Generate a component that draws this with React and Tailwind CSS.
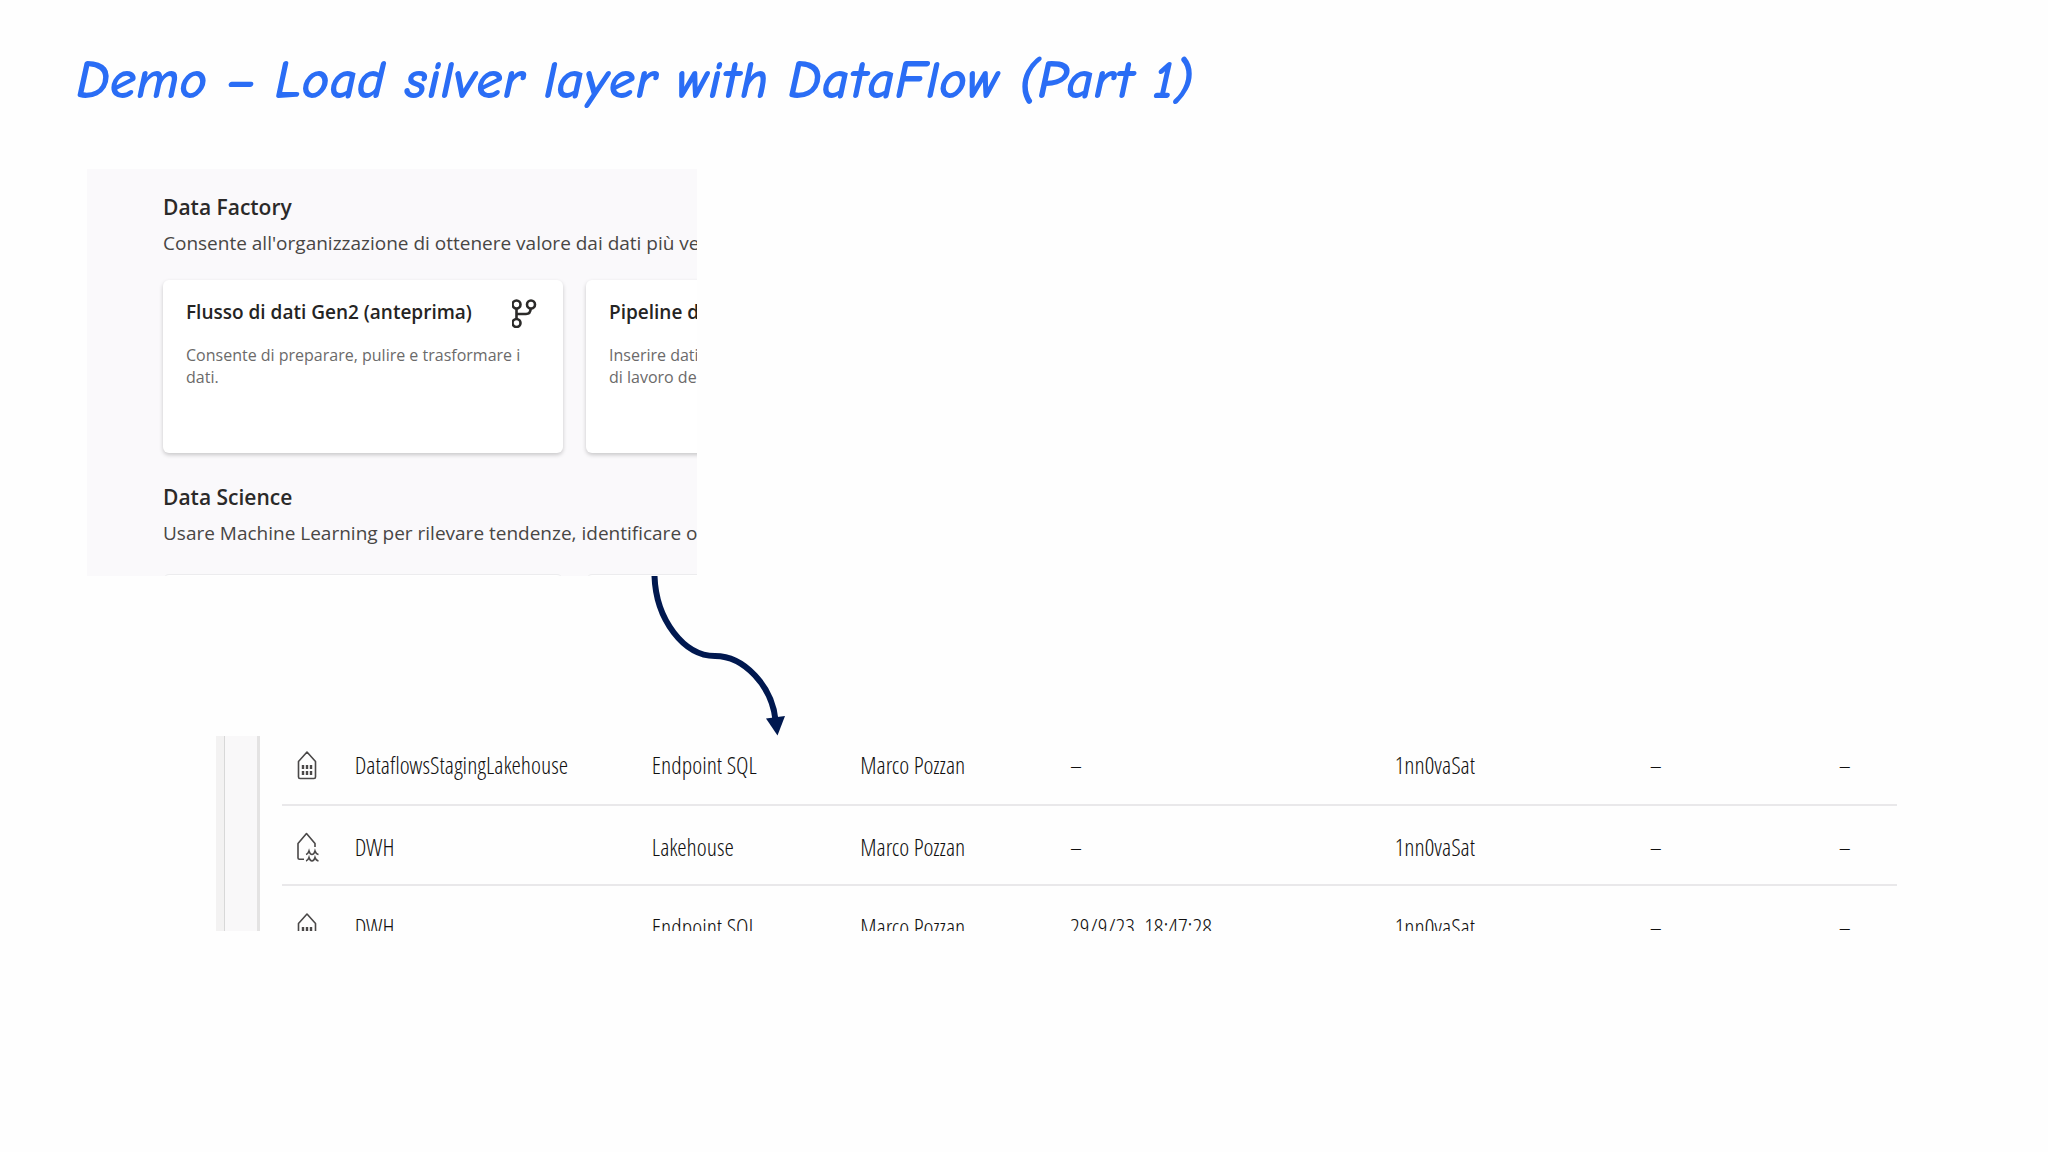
import { clsx } from 'clsx';

const cards = [
  {
    title: 'Flusso di dati Gen2 (anteprima)',
    text: 'Consente di preparare, pulire e trasformare i dati.',
    icon: true,
  },
  {
    title: 'Pipeline di dati',
    text: 'Inserire dati su vasta scala e orchestrare flussi di lavoro dei dati.',
  },
];

const rows = [
  { icon: 'endpoint', name: 'DataflowsStagingLakehouse', type: 'Endpoint SQL', owner: 'Marco Pozzan', refreshed: '–', workspace: '1nn0vaSat' },
  { icon: 'lakehouse', name: 'DWH', type: 'Lakehouse', owner: 'Marco Pozzan', refreshed: '–', workspace: '1nn0vaSat' },
  { icon: 'endpoint', name: 'DWH', type: 'Endpoint SQL', owner: 'Marco Pozzan', refreshed: '29/9/23, 18:47:28', workspace: '1nn0vaSat' },
];

function BranchIcon() {
  return (
    <svg viewBox="0 0 28 32" className="w-7 h-8 shrink-0" fill="none" stroke="#2b2a29" strokeWidth="2.6">
      <circle cx="4.5" cy="8.5" r="4" />
      <circle cx="19" cy="8.500" r="4" />
      <circle cx="4.500" cy="27" r="4" />
      <path d="M4.500 12.500v10.500M4.500 18H14q4.500 0 4.700-5.500" />
    </svg>
  );
}

function EndpointIcon() {
  return (
    <svg viewBox="0 0 24 32" className="block w-6 h-8" fill="none" stroke="#4a4848" strokeWidth="1.6">
      <path d="M3.500 12.500 12 3l8.500 9.500V28q0 1.500-1.500 1.500H5q-1.500 0-1.500-1.500z" strokeLinejoin="round" />
      <path d="M8 16v4M12 16v4M16 16v4M8 22v4M12 22v4M16 22v4" strokeWidth="2.400" />
    </svg>
  );
}

function LakehouseIcon() {
  return (
    <svg viewBox="0 0 24 32" className="block w-6 h-8" fill="none" stroke="#4a4848" strokeWidth="1.6">
      <path d="M20 16v-3.500l-8.500-10-8.500 10V27q0 1.200 1.500 1.200H9" strokeLinejoin="round" />
      <path d="M11 23.500q2-.5 3-3.500 1 3.500 3 3.500t3-3.500q1 3 3.500 3.500M11 30q2-.5 3-3.500 1 3.500 3 3.500t3-3.500q1 3 3.500 3.500" />
    </svg>
  );
}

function Card({ title, text, icon }) {
  return (
    <button className="w-[400px] h-[173px] shrink-0 rounded-md bg-white px-[23px] pt-4 text-left shadow-[0_2px_4px_rgba(0,0,0,0.2)] flex flex-col">
      <span className="flex h-9 w-full justify-between">
        <span className="pt-1 text-[19px] leading-6 font-semibold text-[#252423]">{title}</span>
        {icon && <BranchIcon />}
      </span>
      <span className="mt-3 text-[16px] leading-[22px] text-[#6b6a6a]">{text}</span>
    </button>
  );
}

function SectionHeader({ title, text }) {
  return (
    <div className="whitespace-nowrap">
      <h2 className="text-[21px] leading-7 font-semibold text-[#2b2a29]">{title}</h2>
      <p className="mt-2 text-[19px] leading-7 text-[#484644]">{text}</p>
    </div>
  );
}

function CatalogPanel() {
  return (
    <section className="w-[610px] h-[407px] overflow-hidden bg-[#faf9fb] pl-[76px] pt-6">
      <SectionHeader
        title="Data Factory"
        text="Consente all'organizzazione di ottenere valore dai dati più velocemente"
      />
      <div className="mt-[23px] flex gap-[23px]">
        {cards.map((card) => (
          <Card key={card.title} {...card} />
        ))}
      </div>
      <div className="mt-[30px]">
        <SectionHeader
          title="Data Science"
          text="Usare Machine Learning per rilevare tendenze, identificare outlier"
        />
      </div>
      <div className="mt-[27px] flex gap-[23px]">
        <div className="h-4 w-[400px] shrink-0 rounded-md border border-[#ececee] bg-white" />
        <div className="h-4 w-[400px] shrink-0 rounded-md border border-[#ececee] bg-white" />
      </div>
    </section>
  );
}

function FlowArrow() {
  return (
    <svg viewBox="640 576 160 160" className="block w-40 h-40 ml-[640px]">
      <path d="M654.500 576C656 620 684 656 715 656c29 0 57 30 60.500 64" fill="none" stroke="#00184f" strokeWidth="6" />
      <path d="M766 718.500 785 716l-7.500 19.500z" fill="#00184f" />
    </svg>
  );
}

function ItemsTable() {
  return (
    <section className="ml-[216px] mr-[151px] h-[195px] flex overflow-hidden">
      <div className="w-[9px] shrink-0 bg-[#f3f2f2] border-r border-[#d8d8d8]" />
      <div className="w-[35px] shrink-0 bg-[#f9f8f9] border-r-[3px] border-[#e4e3e3]" />
      <div className="flex-1 pl-[22px]">
        <table className="w-full table-fixed text-left text-2xl leading-8 font-light text-[#111010]">
          <colgroup>
            <col className="w-[4.5%]" />
            <col className="w-[18.4%]" />
            <col className="w-[12.9%]" />
            <col className="w-[13%]" />
            <col className="w-[20.1%]" />
            <col className="w-[15.8%]" />
            <col className="w-[11.7%]" />
            <col />
          </colgroup>
          <tbody>
            {rows.map((row, i) => (
              <tr
                key={i}
                className={clsx(
                  'align-top whitespace-nowrap border-b-2 border-[#e9e8ea]',
                  i === 0 ? '[&>td]:pt-[13px] [&>td]:pb-[23px]' : '[&>td]:pt-[25px] [&>td]:pb-[21px]'
                )}
              >
                <td className="pl-[13px]">
                  {row.icon === 'endpoint' ? <EndpointIcon /> : <LakehouseIcon />}
                </td>
                <td>{row.name}</td>
                <td>{row.type}</td>
                <td>{row.owner}</td>
                <td>{row.refreshed}</td>
                <td>{row.workspace}</td>
                <td>–</td>
                <td>–</td>
              </tr>
            ))}
          </tbody>
        </table>
      </div>
    </section>
  );
}

export default function App() {
  return (
    <main className="min-h-screen overflow-hidden bg-[#fefefe] font-['Open_Sans',sans-serif]">
      <h1 className="pl-[76px] pt-[41px] text-[54px] leading-[80px] italic font-bold text-[#2a6df5] font-['Comic_Sans_MS','Comic_Neue','Open_Sans',sans-serif]">
        Demo – Load silver layer with DataFlow (Part 1)
      </h1>
      <div className="mt-12 ml-[87px]">
        <CatalogPanel />
      </div>
      <FlowArrow />
      <div className="font-['Open_Sans_Condensed_Light','Open_Sans_Condensed','Open_Sans',sans-serif]">
        <ItemsTable />
      </div>
    </main>
  );
}
